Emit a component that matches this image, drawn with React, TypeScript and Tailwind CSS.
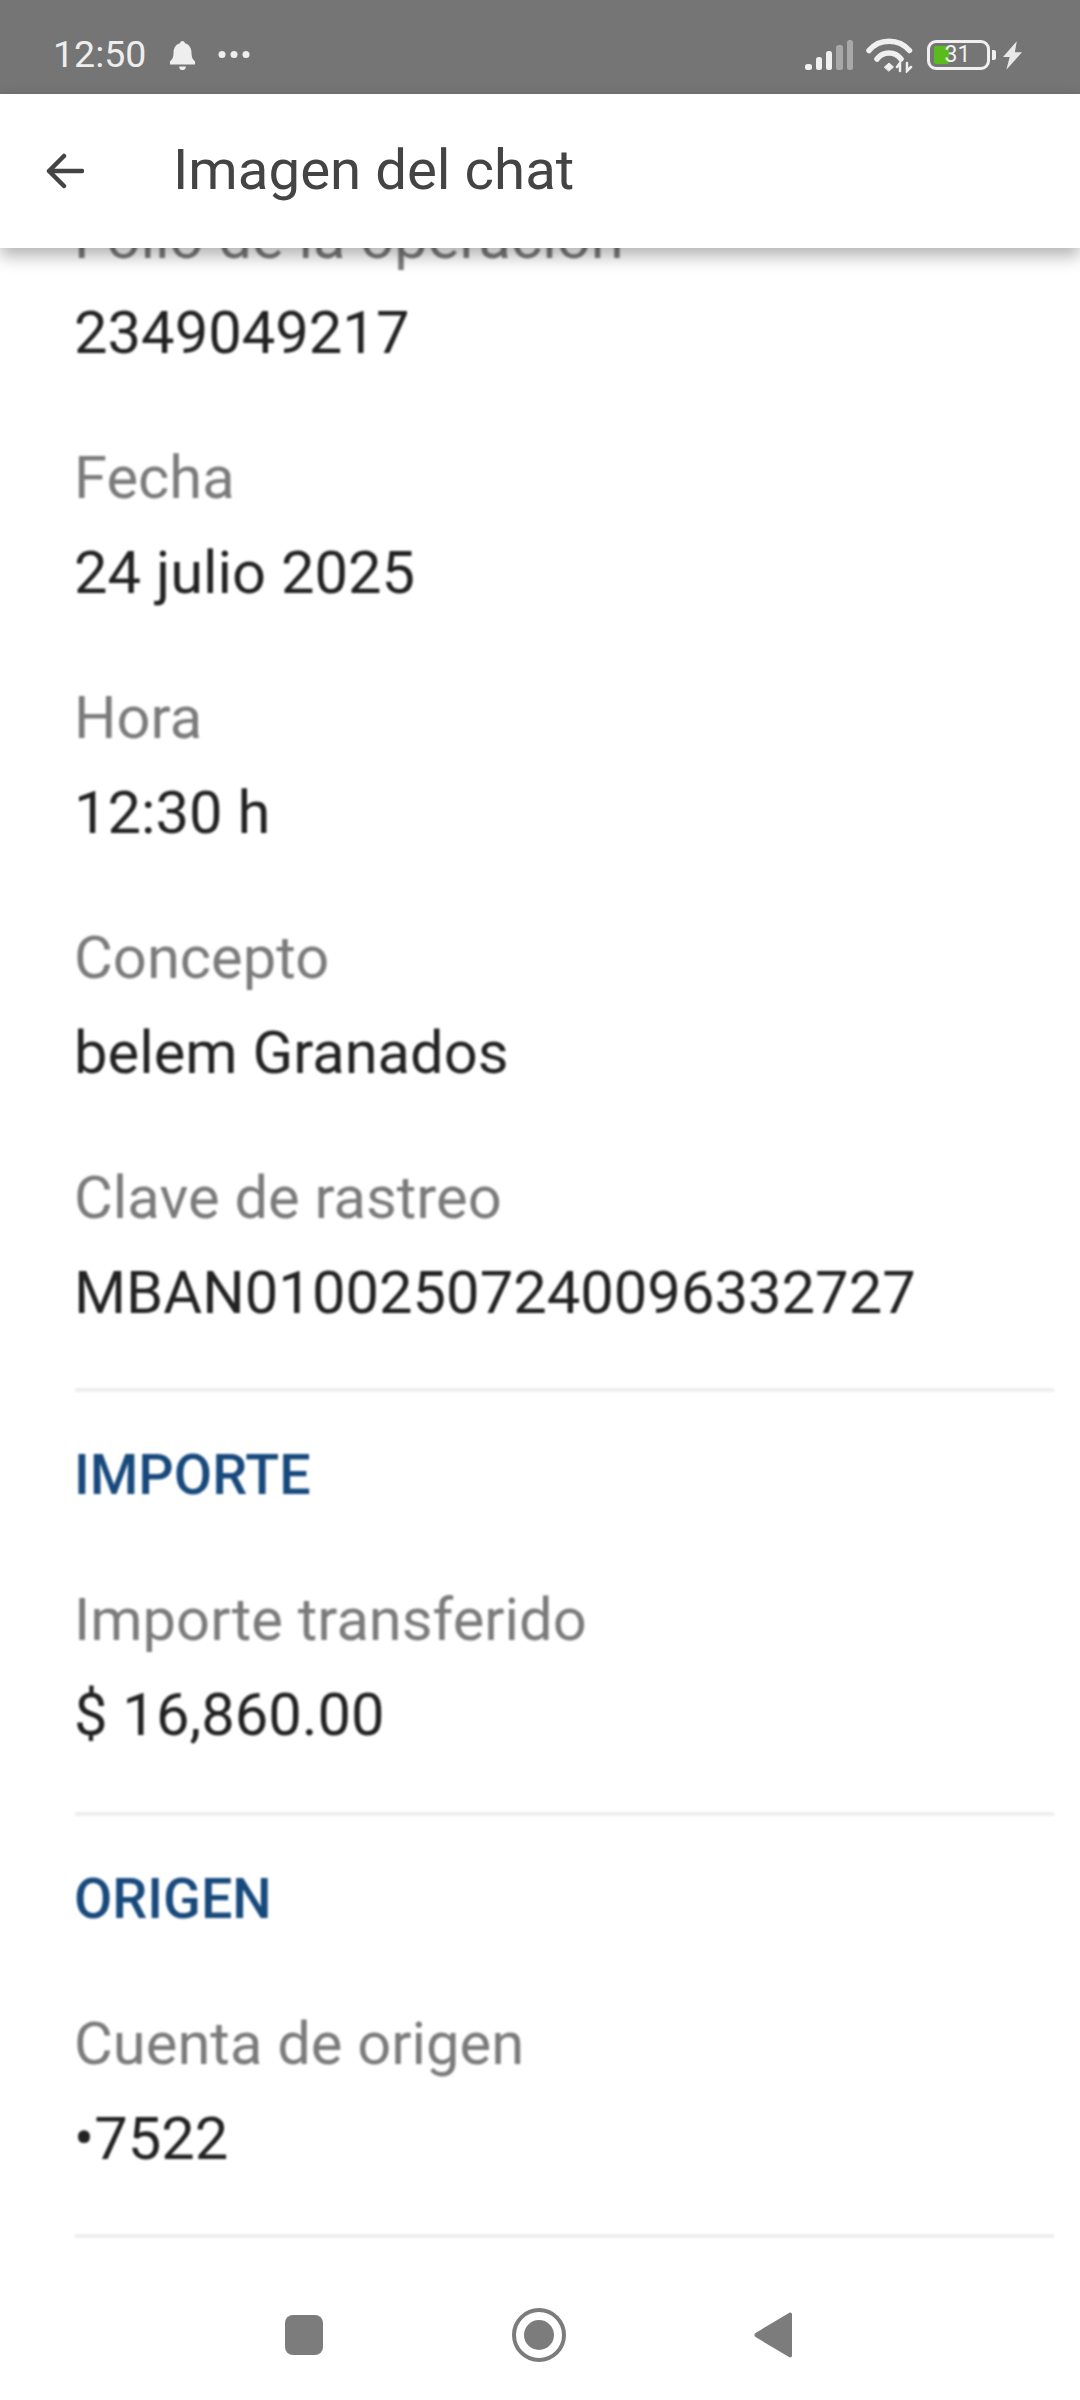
const font = { fontFamily: 'Roboto, "Liberation Sans", sans-serif' }

function Field({ label, value }: { label: string; value: string }) {
  return (
    <div className="h-[240px] pt-[25px]">
      <div className="h-[95px] text-[59.7px] leading-[70px] text-[#7b7b7b]">{label}</div>
      <div className="h-[70px] text-[59.7px] leading-[70px] text-[#222222]">{value}</div>
    </div>
  )
}

function Section({ title, children }: { title: string; children: React.ReactNode }) {
  return (
    <section>
      <h2 className="h-[61px] mt-[53px] text-[55.6px] leading-[61px] font-medium text-[#17497c]">{title}</h2>
      <div className="mt-[54px]">{children}</div>
    </section>
  )
}

function Divider({ className = 'mt-[10px]' }: { className?: string }) {
  return <div className={`${className} ml-px h-[4px] bg-[#eeeeee]`} />
}

function StatusBar() {
  return (
    <div className="h-[94px] shrink-0 bg-[#757575] flex items-center pt-[16px] pl-[53px] text-[#eeeeee]">
      <span className="text-[37.5px] leading-none w-[92px]">12:50</span>
      <svg className="ml-[24px]" width="27" height="31" viewBox="0 0 28 34" preserveAspectRatio="none" fill="#eeeeee">
        <path d="M14 1c1.6 0 2.5 1 2.5 2.6 4.6 1.3 6.8 5.3 6.8 10.4 0 4.600 1 7.200 3.700 9.600V27H1v-3.400c2.700-2.400 3.700-5 3.700-9.600 0-5.100 2.200-9.100 6.800-10.400C11.500 2 12.400 1 14 1z" />
        <path d="M10.500 29h7c0 2.400-1.500 4-3.500 4s-3.500-1.600-3.500-4z" />
      </svg>
      <svg className="ml-[22px] mt-[-2px]" width="32" height="9" viewBox="0 0 32 9" fill="#eeeeee">
        <circle cx="4" cy="4.500" r="3.500" />
        <circle cx="16" cy="4.500" r="3.500" />
        <circle cx="28" cy="4.500" r="3.500" />
      </svg>
      <div className="ml-auto flex items-center mr-[58px]">
        <svg width="48" height="30" viewBox="0 0 48 30">
          <rect x="0" y="24" width="7" height="6" rx="2.500" fill="#f0f0f0" />
          <rect x="11" y="17" width="6" height="13" rx="2.500" fill="#f0f0f0" />
          <rect x="21" y="11" width="6" height="19" rx="2.500" fill="#f0f0f0" />
          <rect x="31" y="5" width="7" height="25" rx="2.500" fill="#a8a8a8" />
          <rect x="42" y="0" width="6" height="30" rx="2.500" fill="#a8a8a8" />
        </svg>
        <svg className="ml-[13px]" width="47" height="35" viewBox="0 0 47 35" fill="none" stroke="#f0f0f0" strokeLinecap="round">
          <path d="M3 12.500C13 0 33 0 43.500 12.500" strokeWidth="5.500" />
          <path d="M11 21C17 13 29 13 35 21" strokeWidth="5.500" />
          <path d="M18.500 29l4.500-4 4.500 4-4.500 4z" fill="#f0f0f0" strokeWidth="1" />
          <path d="M34 33v-8l-3 4M41 25v8l4-4" strokeWidth="2.500" />
        </svg>
        <div className="relative ml-[14px] h-[30px] w-[63px] rounded-[9px] border-[3px] border-[#f0f0f0]">
          <div className="absolute left-[4px] top-[3px] h-[18px] w-[15px] rounded-[2px] bg-[#5cbb1c]" />
          <span className="absolute inset-x-0 top-0 text-center text-[23px] leading-[24px] text-[#f0f0f0] pr-[2px]">31</span>
        </div>
        <div className="ml-[2px] h-[10px] w-[4px] rounded-r-[2px] bg-[#f0f0f0]" />
        <svg className="ml-[7px]" width="19" height="29" viewBox="0 0 20 30" fill="#e8e8e8">
          <path d="M14.500 0L0 16.500h7L3.500 30 20 11.500h-7.500z" />
        </svg>
      </div>
    </div>
  )
}

function Header() {
  return (
    <header className="relative z-10 h-[154px] shrink-0 bg-white flex items-center shadow-[0_8px_16px_rgba(0,0,0,0.3)]">
      <svg className="ml-[46px]" width="38" height="36" viewBox="0 0 38 36" fill="none" stroke="#444444" strokeWidth="4.500" strokeLinecap="round" strokeLinejoin="round">
        <path d="M36 18H3M18 3L3 18l15 15" />
      </svg>
      <h1 className="ml-[89px] mt-[-2px] text-[56.4px] leading-none text-[#444444]">Imagen del chat</h1>
    </header>
  )
}

function NavBar() {
  return (
    <nav className="relative z-10 h-[130px] shrink-0 bg-white">
      <div className="flex items-center h-full">
        <div className="ml-[285px] h-[40px] w-[38px] rounded-[8px] bg-[#7c7c7c]" />
        <svg className="ml-[189px]" width="54" height="54" viewBox="0 0 54 54">
          <circle cx="27" cy="27" r="25" fill="none" stroke="#7c7c7c" strokeWidth="4" />
          <circle cx="27" cy="27" r="15" fill="#7c7c7c" />
        </svg>
        <svg className="ml-[188px]" width="38" height="46" viewBox="0 0 38 46">
          <path d="M35 1c1.500-1 3-.2 3 1.500v41c0 1.700-1.500 2.500-3 1.500L1.500 25c-1.500-1.200-1.500-2.800 0-4z" fill="#7c7c7c" />
        </svg>
      </div>
    </nav>
  )
}

export default function App() {
  return (
    <div className="w-[1080px] h-[2400px] bg-white flex flex-col overflow-hidden" style={font}>
      <StatusBar />
      <Header />
      <main className="flex-1 overflow-hidden pl-[74px] pr-[26px]">
        <div className="mt-[-70px] blur-[0.8px]">
          <Field label="Folio de la operación" value="2349049217" />
          <Field label="Fecha" value="24 julio 2025" />
          <Field label="Hora" value="12:30 h" />
          <Field label="Concepto" value="belem Granados" />
          <Field label="Clave de rastreo" value="MBAN01002507240096332727" />
          <Divider />
          <Section title="IMPORTE">
            <Field label="Importe transferido" value="$ 16,860.00" />
          </Section>
          <Divider className="mt-[12px]" />
          <Section title="ORIGEN">
            <Field label="Cuenta de origen" value="•7522" />
          </Section>
          <Divider />
        </div>
      </main>
      <NavBar />
    </div>
  )
}
